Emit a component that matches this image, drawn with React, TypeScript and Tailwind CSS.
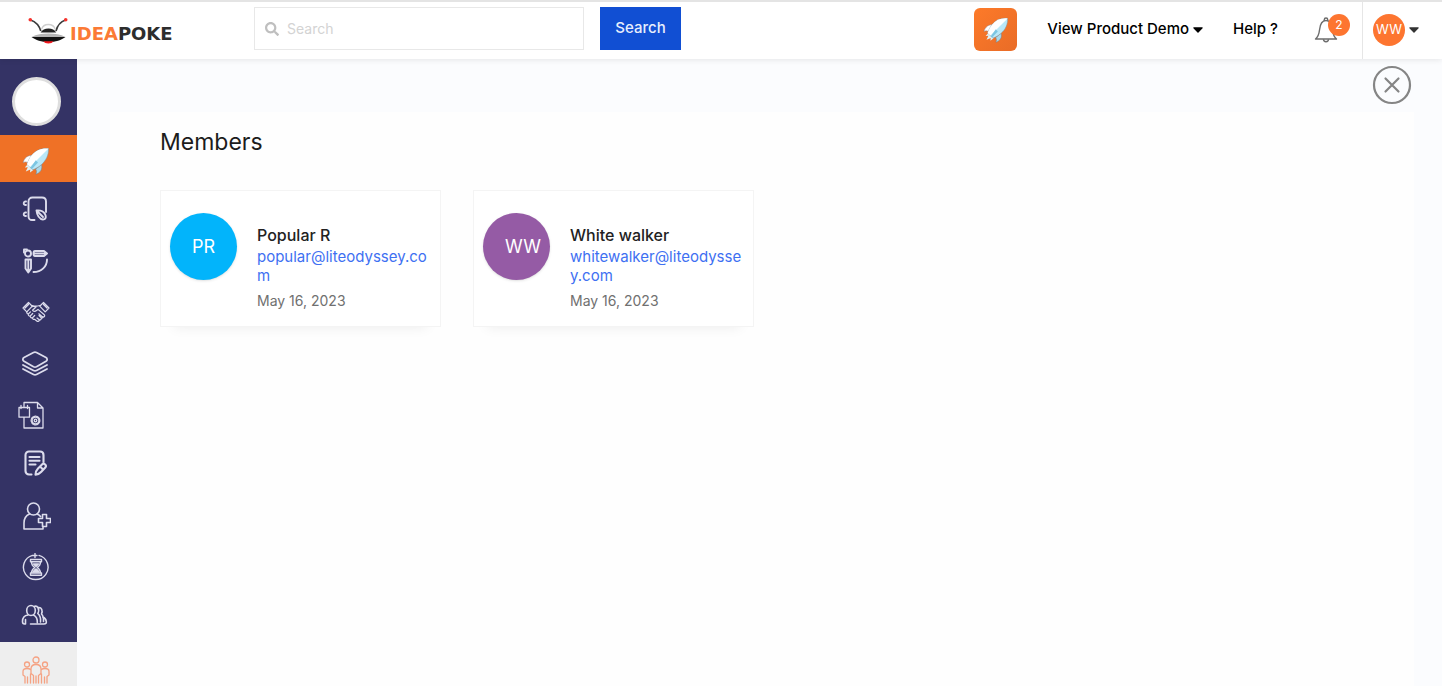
import type { ReactNode } from "react";
import { FaSearch } from "react-icons/fa";

type Member = {
  name: string;
  initials: string;
  email: string;
  joined: string;
  avatar: string;
};

const members: Member[] = [
  { name: "Popular R", initials: "PR", email: "popular@liteodyssey.com", joined: "May 16, 2023", avatar: "bg-[#02b4fb]" },
  { name: "White walker", initials: "WW", email: "whitewalker@liteodyssey.com", joined: "May 16, 2023", avatar: "bg-[#955ba5]" },
];

function Rocket({ className }: { className: string }) {
  return (
    <svg viewBox="0 0 28 28" className={className} aria-hidden="true">
      <path d="M10.500 8.500C6 8 2.500 10.500 1 15.600c1.800-.9 3-.9 4.800 0z" fill="#fff" stroke="#8a7f86" strokeWidth=".5" />
      <path d="M19.500 17.500c1.200 4.800-1 8-5.600 9.800.8-2 .8-3.300-.2-5.200z" fill="#a9d8ea" stroke="#6d7f8c" strokeWidth=".5" />
      <path d="M5.500 17.500 2.800 20.500l3-.3-2 4.300 4.500-1.900-.3 3 3.400-2.600z" fill="#dff1f7" />
      <path d="M26.500 1.500c-7-.7-12.800 1.600-16.800 6.800C7.700 11 6 14.200 5 17.200l5.600 5.600c3-1.100 6-2.700 8.500-4.900 5.100-4.500 7.700-10 7.400-16.400z" fill="#b9e7f7" stroke="#78929f" strokeWidth=".5" />
      <path d="M26.500 1.500c-7-.7-12.800 1.600-16.800 6.800C7.700 11 6 14.200 5 17.200L8 20z" fill="#fff" />
      <path d="m13.800 13.300-5.500 7.800 1.700.8 6-6.400z" fill="#7cc5e2" />
    </svg>
  );
}

function Caret() {
  return (
    <svg viewBox="0 0 10 6" className="h-1.5 w-2.5" fill="currentColor" aria-hidden="true">
      <path d="M.8.300h8.400c.5 0 .7.600.4.900L5.500 5.500a.7.700 0 0 1-1 0L.4 1.200C.1.900.3.300.8.300z" />
    </svg>
  );
}

function LogoMark() {
  return (
    <svg viewBox="0 0 40 28" className="h-7 w-10" aria-hidden="true">
      <path d="M2.500 3C7 4.500 11 8 12.800 14" fill="none" stroke="#3b3b3b" strokeWidth="1.700" />
      <path d="M37.500 3C33 4.500 29.500 8 28 14" fill="none" stroke="#3b3b3b" strokeWidth="1.700" />
      <circle cx="2.300" cy="2.700" r="1.800" fill="#f5322d" />
      <circle cx="37.700" cy="2.700" r="1.800" fill="#f5322d" />
      <path d="M13.500 12.500C14.500 9 17 7.500 20.300 7.500s6 1.500 7 5" fill="none" stroke="#cfcfcf" strokeWidth="1.300" />
      <path d="M12.600 15.600c1.600-2.800 4.200-4.200 7.900-4.200 3.600 0 6.200 1.300 7.700 4.200z" fill="#222" />
      <path d="M3.500 20c5-2.400 10.500-3.400 17-3.400S32.500 17.600 37.500 20z" fill="#b5b5b5" />
      <path d="M3.500 20h34c-4 3-10 5-17 5s-13-2-17-5z" fill="#111" />
      <path d="M15.500 24.200h9.800c-.8 1.500-2.600 2.200-4.900 2.200s-4.100-.7-4.900-2.200z" fill="#f3171d" />
    </svg>
  );
}

function Icon({ children, width = 1.6, className = "size-7 text-[#dcdcec]" }: { children: ReactNode; width?: number; className?: string }) {
  return (
    <svg
      viewBox="0 0 28 28"
      className={className}
      fill="none"
      stroke="currentColor"
      strokeWidth={width}
      strokeLinecap="round"
      strokeLinejoin="round"
      aria-hidden="true"
    >
      {children}
    </svg>
  );
}

const navItems: { label: string; row: string; icon: ReactNode }[] = [
  {
    label: "Notebook",
    row: "h-[52px] pt-0.5 pr-2",
    icon: (
      <Icon width={1.9}>
        <path d="M13.500 25H11c-2 0-3.500-1.500-3.500-3.500v-15C7.500 4 9 2.500 11.500 2.500H21c2.500 0 4 1.500 4 4V17" />
        <path d="M15.500 15.500c4-.5 7 1 8.500 3.500 1.200 2.200 1 4.500-.5 5.200-1.700.8-4.200-.2-6-2.700-1.200-1.800-1.800-3.800-2-6zM16 16l6 6" />
        <path d="M5 6.500c-3-.5-3 4 0 3.500M5 17.500c-3-.5-3 4 0 3.500" />
      </Icon>
    ),
  },
  {
    label: "Design",
    row: "h-[52px] pt-0.5 pr-2",
    icon: (
      <Icon width={1.9}>
        <circle cx="7" cy="6.500" r="3" />
        <path d="M3 2.500v3M3 2.500h3M4.500 12.500h5.500v9L7.300 25.500 4.500 21.500zM7.300 13v12M14 4h9l3 2.500L23 9h-9c-2 0-2-5 0-5zM14 6.500h10M26 12.500c0 7-5.500 12.500-13.500 12.500" />
      </Icon>
    ),
  },
  {
    label: "Partnerships",
    row: "h-[52px] pr-1.5",
    icon: (
      <Icon width={1.200}>
        <path d="m1 10 5.500-5.500 3.800 3.700-5.500 5.600zM27 10l-5.500-5.500-3.800 3.700 5.500 5.600zM6.500 6.500 3 10M21.500 6.500 25 10" />
        <path d="M10.300 7.500c2.700.8 5 .7 7.400 0M10 8.700c1.700-.4 2.800-.2 4 .3l-3.500 3.200c.8 1.500 2.700 1.400 4 .3l1.500-1.100 6 5.100c1.700 1.500-.2 3.300-1.700 2.200l-3.500-2.900M5 13.800c-.7 1 .2 2.200 1.300 2.200-.3 1.300.8 2.200 1.900 2 0 1.300 1 2.100 2.200 1.800.1 1.200 1.200 1.900 2.200 1.500l2.200 1.700c1.200.9 2.700-.1 2.500-1.200 1.200.4 2.200-.6 2-1.600 1 .2 2-.5 1.800-1.500M6.300 16l2.200-2.200M8.200 18l2.500-2.500M10.400 19.800l2.300-2.300M15 20l2.300 1.800M17 17.500l2.500 2.500" />
      </Icon>
    ),
  },
  {
    label: "Layers",
    row: "h-[52px] pr-2",
    icon: (
      <Icon width={1.800}>
        <path d="M12.500 2.500 3 7.500c-1.500.8-1.500 3 0 3.800l9.500 5.400c1 .5 2 .5 3 0l9.500-5.400c1.500-.8 1.500-3 0-3.800l-9.500-5c-1-.5-2-.5-3 0zM2 15l10.500 5.500c1 .5 2 .5 3 0L26 15M2 19l10.500 5.500c1 .5 2 .5 3 0L26 19" />
      </Icon>
    ),
  },
  {
    label: "Project files",
    row: "h-[52px] pr-4 pb-0.5",
    icon: (
      <Icon width={1.300}>
        <path d="M7 5.500V1.500h13.500L26 7v20H7V16.500M20.500 1.500V7H26M2 6.500h10.500v9.700H2zM4 4.500v3M10.500 4.500v3" />
        <circle cx="18.500" cy="19.500" r="4.300" strokeDasharray="2 1" />
        <circle cx="18.500" cy="19.500" r="3.400" />
        <circle cx="18.500" cy="19.500" r="1.300" />
      </Icon>
    ),
  },
  {
    label: "Notes",
    row: "h-[46px] pr-2 pb-0.5",
    icon: (
      <Icon width={2.100}>
        <path d="M10.500 24.500H8c-2 0-3.500-1.500-3.500-3.500V5C4.500 3 6 1.500 8 1.500h11c2 0 3.500 1.500 3.500 3.500v7M8.500 7h10M8.500 10.700h10M8.500 14.500h6" />
        <path d="M14.500 24.700c0-2.700.8-4.500 2.500-6.200l4-4c2-2 5.200.8 3.300 3l-4 4.200c-1.600 1.800-3.300 2.800-5.800 3zM19 16.500l3.300 3.200" />
      </Icon>
    ),
  },
  {
    label: "Add user",
    row: "h-[54px] pt-0.5 pr-1",
    icon: (
      <Icon width={1.600}>
        <circle cx="10.500" cy="7" r="6" />
        <path d="M6.500 12C3 13.500 1 17 1 21v6h19v-3M14.500 12.200c1.300.5 2.300 1.300 3 2.300M19.500 12.500h4v4h4v4h-4v4h-4v-4h-4v-4h4z" />
      </Icon>
    ),
  },
  {
    label: "History",
    row: "h-[50px] pr-1.5",
    icon: (
      <Icon width={1.400}>
        <path d="M17 2.400A12.300 12.300 0 1 1 10.500 2.400M13 .5v4M11 2.500h4" />
        <path d="M8.500 6.500h11v2.300h-11zM8.500 20h11v2.300h-11zM9.500 9c0 2.700 1.200 4.200 3.300 5.500-2.100 1.300-3.300 2.800-3.300 5.500M18.500 9c0 2.700-1.200 4.200-3.300 5.500 2.100 1.300 3.300 2.800 3.300 5.500" />
        <path d="M11.500 11h5L14 13.500zM11 19c1-2 2-2.500 3-3 1 .5 2 1 3 3z" fill="currentColor" />
      </Icon>
    ),
  },
  {
    label: "Groups",
    row: "h-[50px] pr-2 pb-1",
    icon: (
      <Icon width={1.600}>
        <ellipse cx="10" cy="9.500" rx="4.300" ry="5" />
        <path d="M7 14c-4 .5-5.500 3-5.500 6.500 0 1.500.5 2.500 2 2.500M4.500 18.500V23M9.500 23H23c2 0 2.500-1 2.300-2.500-.3-2.500-1.500-3.800-3.500-4.500M13 5.500c3.500-1.500 6 2.500 3.800 7 2.200 2 3.200 5 2.700 8.500M17.500 6.500c3-.3 4.500 3 3 6.500 1.500 1.500 2.300 4 2 7.500M12.500 14c3 1.500 4 4 3.800 7.500" />
      </Icon>
    ),
  },
];

function Header() {
  return (
    <header className="relative z-10 flex h-[59px] items-center border-t-2 border-[#e4e4e4] bg-white shadow-[0_1px_6px_rgba(0,0,0,0.09)]">
      <a href="#home" className="flex w-[254px] shrink-0 items-center pl-7">
        <LogoMark />
        <span className="pt-1.5 pl-0.5 font-['DejaVu_Sans',sans-serif] text-lg leading-4 font-bold text-[#2d2d2d]">
          <span className="text-[#fb7a35]">IDEA</span>POKE
        </span>
      </a>
      <form className="flex items-center gap-4 pb-1" onSubmit={(e) => e.preventDefault()}>
        <label className="flex h-[43px] w-[330px] items-center gap-2 border border-[#e8e8e8] px-2.5">
          <FaSearch className="size-[14px] text-[#bfbfbf]" aria-hidden="true" />
          <input
            type="search"
            aria-label="Search"
            placeholder="Search"
            className="min-w-0 flex-1 bg-transparent text-sm text-gray-700 outline-none placeholder:text-[#d3d3d3]"
          />
        </label>
        <button type="submit" className="h-[43px] w-[81px] bg-[#114fd3] text-[15px] font-medium text-[#e8eefc]">
          Search
        </button>
      </form>
      <nav className="ml-auto flex h-full shrink-0 items-center" aria-label="Account">
        <div className="flex items-center pb-0.5">
          <button
            type="button"
            aria-label="Launch"
            className="mr-[30px] flex size-[43px] items-center justify-center rounded-md bg-linear-to-br from-[#fd7a29] to-[#e96c27]"
          >
            <Rocket className="size-[26px]" />
          </button>
          <button type="button" className="mr-[30px] flex items-center gap-1 text-[15px] font-medium text-black">
            View Product Demo
            <Caret />
          </button>
          <a href="#help" className="mr-9 text-[15px] font-medium text-black">
            Help ?
          </a>
          <button type="button" aria-label="Notifications" className="relative mr-3 h-7 w-9">
            <svg viewBox="0 0 24 28" className="h-7 w-6" fill="none" stroke="#6c6c6c" strokeWidth="1.400" strokeLinejoin="round" aria-hidden="true">
              <path d="M10.300 4.800V3.500c0-2 3.400-2 3.400 0v1.300M1.500 23c2.500-2 3.500-4.500 4-9 .5-5 2.200-9.500 6.500-9.500s6 4.500 6.500 9.500c.5 4.500 1.500 7 4 9z" />
              <path d="M9.500 23.300c0 3.200 5 3.200 5 0" />
            </svg>
            <span className="absolute -top-0.5 right-0 flex size-[22px] items-center justify-center rounded-full bg-[#fd7530] text-xs text-white">2</span>
          </button>
        </div>
        <button
          type="button"
          aria-label="User menu"
          className="flex h-full w-20 items-center gap-1 border-l border-[#e6e6e6] pb-0.5 pl-2.5 text-[#333]"
        >
          <span className="flex size-8 items-center justify-center rounded-full bg-[#fd7530] text-[13px] text-white">WW</span>
          <Caret />
        </button>
      </nav>
    </header>
  );
}

function Sidebar() {
  return (
    <nav className="flex w-[77px] shrink-0 flex-col bg-[#343365]" aria-label="Main">
      <a href="#profile" aria-label="Profile" className="flex h-[76px] items-center justify-center pt-2 pr-1">
        <span className="size-[49px] rounded-full border-[3px] border-[#dedede] bg-white" />
      </a>
      <a href="#launch" aria-label="Launch" className="flex h-[47px] items-center justify-center bg-[#ef7126] pt-1 pr-1.5">
        <Rocket className="size-7" />
      </a>
      {navItems.map((item) => (
        <a key={item.label} href="#section" aria-label={item.label} className={`flex items-center justify-center ${item.row}`}>
          {item.icon}
        </a>
      ))}
      <a href="#members" aria-label="Members" className="flex flex-1 items-start justify-center bg-[#eeeeee] pt-3.5 pr-1.5">
        <Icon width={1.300} className="size-7 text-[#f5a283]">
          <circle cx="14" cy="4" r="3" />
          <circle cx="5" cy="8.500" r="2.500" />
          <circle cx="23" cy="8.500" r="2.500" />
          <path d="M11.500 27v-7.500L9 17.500V13c0-3 2-4.500 5-4.500s5 1.500 5 4.500v4.500l-2.500 2V27M14 20v7M3 27v-6.500l-2-1.500v-3.500C1 13 2.500 12.500 5 12.500c1.700 0 2.800.3 3.500 1M5.500 21v6M8.500 18v9M25 27v-6.500l2-1.500v-3.500c0-2.500-1.500-3-4-3-1.700 0-2.800.3-3.500 1M22.500 21v6M19.500 18v9" />
        </Icon>
      </a>
    </nav>
  );
}

function MemberCard({ member }: { member: Member }) {
  return (
    <li className="flex min-h-[137px] w-[281px] gap-5 border border-[#f4f4f4] bg-white px-[9px] pb-4 shadow-[0_14px_12px_-14px_rgba(0,0,0,0.08)]">
      <span className={`mt-[22px] flex size-[67px] shrink-0 items-center rounded-full pl-[22px] text-lg text-white shadow-sm ${member.avatar}`}>
        {member.initials}
      </span>
      <div className="w-[174px] pt-[34px]">
        <h2 className="text-base leading-5 font-medium text-[#222]">{member.name}</h2>
        <a href={`mailto:${member.email}`} className="mt-0.5 block text-[15px] leading-[19px] break-all text-[#3e70f2]">
          {member.email}
        </a>
        <p className="mt-1.5 text-sm leading-[19px] text-[#707070]">{member.joined}</p>
      </div>
    </li>
  );
}

export default function App() {
  return (
    <div className="flex min-h-screen flex-col bg-[#fbfcfe] font-[Inter,sans-serif]">
      <Header />
      <div className="flex flex-1">
        <Sidebar />
        <main className="flex min-w-0 flex-1 flex-col pr-7 pl-[33px]">
          <div className="flex h-[53px] items-center justify-end pr-0.5 pb-0.5">
            <button type="button" aria-label="Close">
              <svg viewBox="0 0 40 40" className="size-10" fill="none" stroke="#858585" strokeLinecap="round" aria-hidden="true">
                <circle cx="20" cy="20" r="18" strokeWidth="2.200" />
                <path d="m13.500 13.500 13 13M26.500 13.500l-13 13" strokeWidth="2.200" />
              </svg>
            </button>
          </div>
          <section className="flex-1 bg-[#fefefe] px-[50px] pt-4">
            <h1 className="text-[23px] leading-7 text-[#1c1c1c]">Members</h1>
            <ul className="mt-[34px] flex flex-wrap gap-8">
              {members.map((m) => (
                <MemberCard key={m.email} member={m} />
              ))}
            </ul>
          </section>
        </main>
      </div>
    </div>
  );
}
